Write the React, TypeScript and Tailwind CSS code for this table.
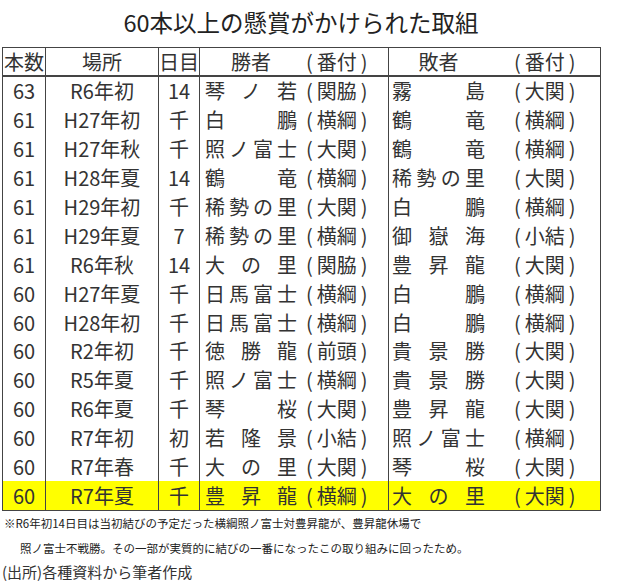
type Row = {
  count: string;
  basho: string;
  day: string;
  winner: string;
  winnerRank: string;
  loser: string;
  loserRank: string;
  highlight?: boolean;
};

const ROWS: Row[] = [
  { count: "63", basho: "R6年初", day: "14", winner: "琴ノ若", winnerRank: "関脇", loser: "霧島", loserRank: "大関" },
  { count: "61", basho: "H27年初", day: "千", winner: "白鵬", winnerRank: "横綱", loser: "鶴竜", loserRank: "横綱" },
  { count: "61", basho: "H27年秋", day: "千", winner: "照ノ富士", winnerRank: "大関", loser: "鶴竜", loserRank: "横綱" },
  { count: "61", basho: "H28年夏", day: "14", winner: "鶴竜", winnerRank: "横綱", loser: "稀勢の里", loserRank: "大関" },
  { count: "61", basho: "H29年初", day: "千", winner: "稀勢の里", winnerRank: "大関", loser: "白鵬", loserRank: "横綱" },
  { count: "61", basho: "H29年夏", day: "7", winner: "稀勢の里", winnerRank: "横綱", loser: "御嶽海", loserRank: "小結" },
  { count: "61", basho: "R6年秋", day: "14", winner: "大の里", winnerRank: "関脇", loser: "豊昇龍", loserRank: "大関" },
  { count: "60", basho: "H27年夏", day: "千", winner: "日馬富士", winnerRank: "横綱", loser: "白鵬", loserRank: "横綱" },
  { count: "60", basho: "H28年初", day: "千", winner: "日馬富士", winnerRank: "横綱", loser: "白鵬", loserRank: "横綱" },
  { count: "60", basho: "R2年初", day: "千", winner: "徳勝龍", winnerRank: "前頭", loser: "貴景勝", loserRank: "大関" },
  { count: "60", basho: "R5年夏", day: "千", winner: "照ノ富士", winnerRank: "横綱", loser: "貴景勝", loserRank: "大関" },
  { count: "60", basho: "R6年夏", day: "千", winner: "琴桜", winnerRank: "大関", loser: "豊昇龍", loserRank: "大関" },
  { count: "60", basho: "R7年初", day: "初", winner: "若隆景", winnerRank: "小結", loser: "照ノ富士", loserRank: "横綱" },
  { count: "60", basho: "R7年春", day: "千", winner: "大の里", winnerRank: "大関", loser: "琴桜", loserRank: "大関" },
  { count: "60", basho: "R7年夏", day: "千", winner: "豊昇龍", winnerRank: "横綱", loser: "大の里", loserRank: "大関", highlight: true },
];

// spreads the characters of a name evenly across a 4-character box
function Name({ text, width }: { text: string; width: string }) {
  return (
    <div className={`flex justify-between ${width}`}>
      {Array.from(text).map((c, i) => (
        <span key={i}>{c}</span>
      ))}
    </div>
  );
}

function Rank({ text }: { text: string }) {
  return (
    <span className="flex">
      <span>(</span>
      <span className="mx-[4px]">{text}</span>
      <span>)</span>
    </span>
  );
}

export default function App() {
  return (
    <div className="w-[640px] h-[587px] bg-white text-[#333] font-['Noto_Sans_CJK_JP',sans-serif] overflow-hidden">
      <h1 className="pt-[8px] pr-[38px] h-[47px] text-center text-[23.5px] leading-[28px] text-[#222] font-normal">
        60本以上の懸賞がかけられた取組
      </h1>

      <div className="ml-[2px] w-[599px] border-[1.5px] border-[#444] text-[20px] leading-none">
        {/* header */}
        <div className="flex h-[29px] border-b-2 border-[#444]">
          <div className="w-[43px] border-r-[1.5px] border-[#444] flex items-center justify-center">本数</div>
          <div className="w-[113px] border-r-[1.5px] border-[#444] flex items-center justify-center">場所</div>
          <div className="w-[41px] border-r-[1.5px] border-[#444] flex items-center justify-center">日目</div>
          <div className="w-[189px] border-r-[1.5px] border-[#444] flex items-center pl-[5px]">
            <div className="w-[92px] text-center">勝者</div>
            <div className="ml-[9px]">
              <Rank text="番付" />
            </div>
          </div>
          <div className="flex-1 flex items-center pl-[3px]">
            <div className="w-[93px] text-center">敗者</div>
            <div className="ml-[29px]">
              <Rank text="番付" />
            </div>
          </div>
        </div>

        {ROWS.map((r, i) => (
          <div key={i} className={`flex h-[28.9px] ${r.highlight ? "bg-[#ffff00]" : ""}`}>
            <div className="w-[43px] border-r-[1.5px] border-[#444] flex items-center justify-center">{r.count}</div>
            <div className="w-[113px] border-r-[1.5px] border-[#444] flex items-center justify-center">{r.basho}</div>
            <div className="w-[41px] border-r-[1.5px] border-[#444] flex items-center justify-center">{r.day}</div>
            <div className="w-[189px] border-r-[1.5px] border-[#444] flex items-center pl-[5px]">
              <Name text={r.winner} width="w-[92px]" />
              <div className="ml-[9px]">
                <Rank text={r.winnerRank} />
              </div>
            </div>
            <div className="flex-1 flex items-center pl-[3px]">
              <Name text={r.loser} width="w-[93px]" />
              <div className="ml-[29px]">
                <Rank text={r.loserRank} />
              </div>
            </div>
          </div>
        ))}
      </div>

      <div className="pl-[4px] text-[11.5px] leading-[25px] text-[#222]">
        <p>※R6年初14日目は当初結びの予定だった横綱照ノ富士対豊昇龍が、豊昇龍休場で</p>
        <p className="pl-[16px]">照ノ富士不戦勝。その一部が実質的に結びの一番になったこの取り組みに回ったため。</p>
      </div>
      <p className="pl-[2px] text-[15px] leading-[22px] text-[#333]">(出所)各種資料から筆者作成</p>
    </div>
  );
}
